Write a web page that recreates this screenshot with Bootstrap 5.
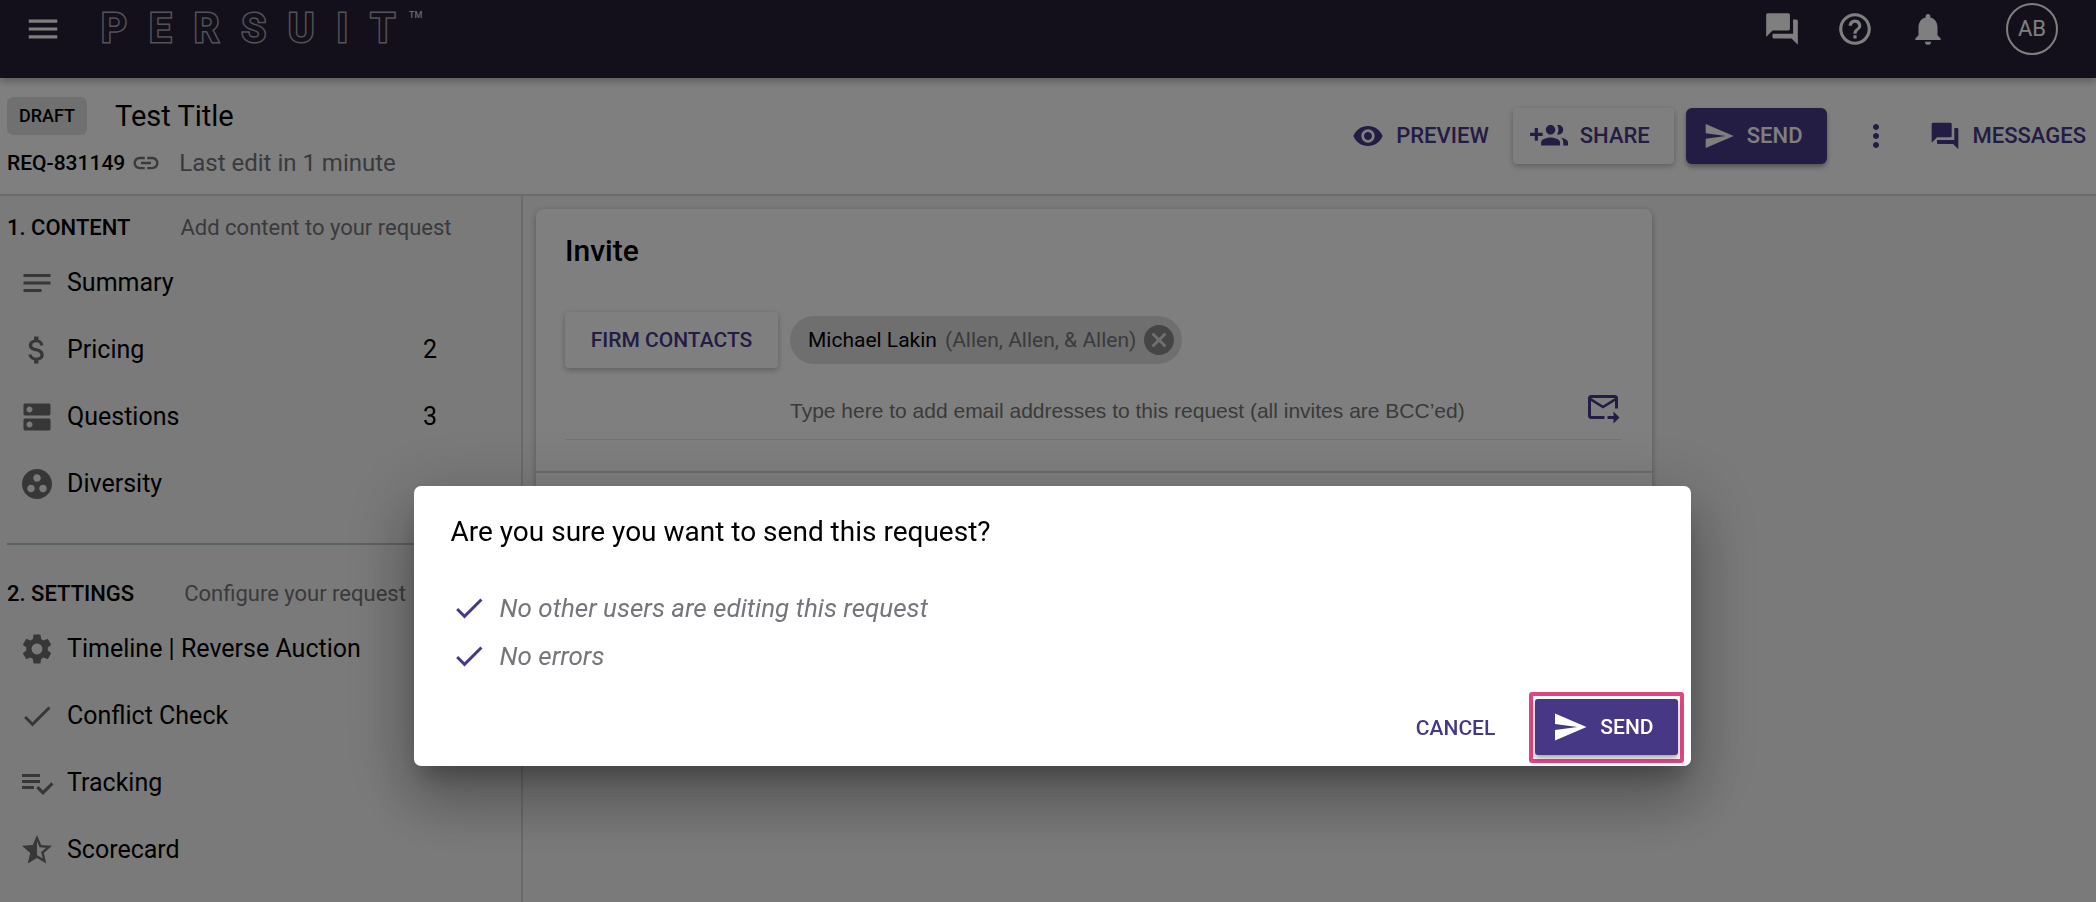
<!DOCTYPE html>
<html lang="en">
<head>
<meta charset="utf-8">
<meta name="viewport" content="width=device-width, initial-scale=1">
<title>Test Title</title>
<link href="https://cdn.jsdelivr.net/npm/bootstrap@5.3.0/dist/css/bootstrap.min.css" rel="stylesheet">
<style>
  :root { --brand: #473886; --muted: #75757b; --line: #d6d6d6; }
  body { font-family: Roboto, "Liberation Sans", sans-serif; font-size: 24px; line-height: 32px; color: #000; background: #f5f5f5; }
  svg { flex: none; fill: currentColor; display: block; }
  .i-30 { width: 30px; height: 30px; }
  .i-32 { width: 32px; height: 32px; }
  .i-36 { width: 36px; height: 36px; }
  .i-38 { width: 38px; height: 38px; }
  .medium { font-weight: 500; }
  .muted { color: var(--muted); }

  .topbar { height: 78px; background: #262036; box-shadow: 0 3px 8px rgba(0,0,0,.3); padding: 0 38px 20px 24px; position: relative; z-index: 1; }
  .topbar .btn, .avatar { color: #fff; }
  .brandmark { margin-left: 39px; text-decoration: none; }
  .outlined { width: 294px; font-size: 40px; line-height: 40px; font-weight: 600; color: #262036; -webkit-text-stroke: 3px #a8a6ae; paint-order: stroke fill; }
  .wordmark-tm { font-size: 9px; line-height: 12px; font-weight: 500; color: #d0d0d0; margin-left: 14px; }
  .avatar { width: 52px; height: 52px; border: 2px solid #fff; border-radius: 50%; font-size: 22px; padding: 0; background: none; }
  .tools { gap: 35px; }

  .titlebar { height: 118px; background: #fff; border-bottom: 2px solid var(--line); padding: 0 10px 0 7px; }
  .draft { background: #e0e0e0; border-radius: 6px; font-size: 18px; line-height: 38px; padding: 0 12px; }
  .doc-title { font-size: 29px; line-height: 38px; font-weight: 400; margin: 0; }
  .doc-meta { margin-top: 12px; gap: 2px; }
  .req { font-size: 21px; }

  .btn { --bs-btn-font-size: 22px; --bs-btn-font-weight: 500; --bs-btn-line-height: 32px; --bs-btn-padding-y: 12px; --bs-btn-border-width: 0; --bs-btn-border-radius: 4px; }
  .btn-plain { --bs-btn-color: var(--brand); --bs-btn-padding-x: 0; }
  .btn-raised { --bs-btn-color: var(--brand); --bs-btn-bg: #fff; --bs-btn-hover-bg: #fafafa; box-shadow: 0 2px 6px rgba(0,0,0,.28); }
  .btn-brand { --bs-btn-color: #fff; --bs-btn-bg: var(--brand); --bs-btn-hover-bg: #3a2d72; --bs-btn-hover-color: #fff; --bs-btn-border-radius: 6px; box-shadow: 0 3px 5px rgba(0,0,0,.35); }
  .btn-icon { display: flex; align-items: center; gap: 12px; height: 56px; }
  .btn-icon.btn-raised, .btn-icon.btn-brand { padding: 0 24px 0 17px; }
  .more { margin: 0 35px 0 31px; }
  .gap-before { margin-left: 12px; }

  .sidebar { width: 523px; border-right: 2px solid var(--line); padding: 15px 0 0 7px; }
  .sidebar h2 { font-size: 22px; line-height: 34px; font-weight: 500; margin: 0; }
  .hint { font-size: 22px; line-height: 34px; margin-left: 50px; }
  .steps { margin-top: 4px; font-size: 25px; }
  .step { height: 67px; padding: 0 84px 0 12px; color: #000; text-decoration: none; }
  .step svg { color: #6e6e6e; }
  .rule { height: 2px; background: #b9c4c2; margin: 26px 0 32px; }

  main { padding: 13px 0 0 13px; }
  .invite { width: 1116px; min-height: 480px; background: #fff; border-radius: 8px; box-shadow: 0 2px 6px rgba(0,0,0,.3); }
  .invite-body { padding: 24px 31px 31px 29px; border-bottom: 2px solid var(--line); }
  .invite h1 { font-size: 30px; line-height: 36px; font-weight: 500; margin: 0 0 43px; }
  .firm { width: 213px; --bs-btn-font-size: 21px; }
  .chip { height: 48px; border-radius: 24px; background: #dedede; padding: 0 8px 0 18px; font-size: 21px; }
  .chip .btn { color: #8a8a8a; }
  .add-row { padding: 15px 0 0 225px; border-bottom: 1px solid #e4e4e4; }
  .add-row input { font-family: "Liberation Sans", Arial, sans-serif; font-size: 21px; line-height: 32px; padding: 12px 0; border: 0; background: none; outline: 0; }
  .add-row input::placeholder { color: #757575; opacity: 1; }

  .modal-dialog { max-width: 1277px; margin: 486px auto 0; }
  .modal { padding-left: 8px; }
  .modal-content { border: 0; border-radius: 7px; box-shadow: 0 16px 22px -8px rgba(0,0,0,.25), 0 36px 56px 4px rgba(0,0,0,.2), 0 14px 68px 12px rgba(0,0,0,.16); color: #000; }
  .modal-title { font-size: 28px; line-height: 36px; font-weight: 400; }
  .modal-header { padding: 28px 37px 0; border: 0; }
  .modal-body { padding: 34px 37px 0; }
  .check-line { height: 48px; gap: 13px; font-size: 26px; font-style: italic; }
  .check-line svg { color: var(--brand); }
  .modal-footer { padding: 12px 7px 3px; border: 0; gap: 34px; }
  .modal-footer > * { margin: 0; }
  .modal-footer .btn { --bs-btn-font-size: 21px; }
  .highlight { border: 4px solid #de4680; border-radius: 3px; padding: 3px 2px 4px; }
  .highlight .btn { --bs-btn-border-radius: 3px; }
</style>
</head>
<body class="min-vh-100 d-flex flex-column">

<svg class="d-none" aria-hidden="true">
  <symbol id="menu" viewBox="0 0 24 24"><path d="M3 18h18v-2H3v2zm0-5h18v-2H3v2zm0-7v2h18V6H3z"/></symbol>
  <symbol id="forum" viewBox="0 0 24 24"><path d="M21 6h-2v9H6v2c0 .55.45 1 1 1h11l4 4V7c0-.55-.45-1-1-1zm-4 6V3c0-.55-.45-1-1-1H3c-.55 0-1 .45-1 1v14l4-4h10c.55 0 1-.45 1-1z"/></symbol>
  <symbol id="help" viewBox="0 0 24 24"><path d="M11 18h2v-2h-2v2zm1-16C6.48 2 2 6.48 2 12s4.48 10 10 10 10-4.48 10-10S17.52 2 12 2zm0 18c-4.41 0-8-3.59-8-8s3.59-8 8-8 8 3.59 8 8-3.59 8-8 8zm0-14c-2.21 0-4 1.79-4 4h2c0-1.1.9-2 2-2s2 .9 2 2c0 2-3 1.75-3 5h2c0-2.25 3-2.5 3-5 0-2.21-1.79-4-4-4z"/></symbol>
  <symbol id="bell" viewBox="0 0 24 24"><path d="M12 22c1.1 0 2-.9 2-2h-4c0 1.1.89 2 2 2zm6-6v-5c0-3.07-1.64-5.64-4.5-6.32V4c0-.83-.67-1.5-1.5-1.5s-1.5.67-1.5 1.5v.68C7.63 5.36 6 7.92 6 11v5l-2 2v1h16v-1l-2-2z"/></symbol>
  <symbol id="eye" viewBox="0 0 24 24"><path d="M12 4.5C7 4.5 2.73 7.61 1 12c1.73 4.39 6 7.5 11 7.5s9.27-3.11 11-7.5c-1.73-4.39-6-7.5-11-7.5zM12 17c-2.76 0-5-2.24-5-5s2.24-5 5-5 5 2.24 5 5-2.24 5-5 5zm0-8c-1.66 0-3 1.34-3 3s1.34 3 3 3 3-1.34 3-3-1.34-3-3-3z"/></symbol>
  <symbol id="group-add" viewBox="0 0 24 24"><path d="M8 10H5V7H3v3H0v2h3v3h2v-3h3v-2zm10 1c1.66 0 2.99-1.34 2.99-3S19.66 5 18 5c-.32 0-.63.05-.91.14.57.81.9 1.79.9 2.86s-.34 2.04-.9 2.86c.28.09.59.14.91.14zm-5 0c1.66 0 2.99-1.34 2.99-3S14.66 5 13 5c-1.66 0-3 1.34-3 3s1.34 3 3 3zm6.62 2.16c.83.73 1.38 1.66 1.38 2.84v2h3v-2c0-1.54-2.37-2.49-4.38-2.84zM13 13c-2 0-6 1-6 3v2h12v-2c0-2-4-3-6-3z"/></symbol>
  <symbol id="send" viewBox="0 0 24 24"><path d="M2.01 21L23 12 2.01 3 2 10l15 2-15 2z"/></symbol>
  <symbol id="more" viewBox="0 0 24 24"><path d="M12 8c1.1 0 2-.9 2-2s-.9-2-2-2-2 .9-2 2 .9 2 2 2zm0 2c-1.1 0-2 .9-2 2s.9 2 2 2 2-.9 2-2-.9-2-2-2zm0 6c-1.1 0-2 .9-2 2s.9 2 2 2 2-.9 2-2-.9-2-2-2z"/></symbol>
  <symbol id="link" viewBox="0 0 24 24"><path d="M3.9 12c0-1.71 1.39-3.1 3.1-3.1h4V7H7c-2.76 0-5 2.24-5 5s2.24 5 5 5h4v-1.9H7c-1.71 0-3.1-1.39-3.1-3.1zM8 13h8v-2H8v2zm9-6h-4v1.9h4c1.71 0 3.1 1.39 3.1 3.1s-1.39 3.1-3.1 3.1h-4V17h4c2.76 0 5-2.24 5-5s-2.24-5-5-5z"/></symbol>
  <symbol id="notes" viewBox="0 0 24 24"><path d="M3 18h12v-2H3v2zM3 6v2h18V6H3zm0 7h18v-2H3v2z"/></symbol>
  <symbol id="dollar" viewBox="0 0 24 24"><path d="M11.8 10.9c-2.27-.59-3-1.2-3-2.15 0-1.09 1.01-1.85 2.7-1.85 1.78 0 2.44.85 2.5 2.1h2.21c-.07-1.72-1.12-3.3-3.21-3.81V3h-3v2.16c-1.94.42-3.5 1.68-3.5 3.61 0 2.31 1.91 3.46 4.7 4.13 2.5.6 3 1.48 3 2.41 0 .69-.49 1.79-2.7 1.79-2.06 0-2.87-.92-2.98-2.1h-2.2c.12 2.19 1.76 3.42 3.68 3.83V21h3v-2.15c1.95-.37 3.5-1.5 3.5-3.55 0-2.84-2.43-3.81-4.7-4.4z"/></symbol>
  <symbol id="dns" viewBox="0 0 24 24"><path d="M20 13H4c-.55 0-1 .45-1 1v6c0 .55.45 1 1 1h16c.55 0 1-.45 1-1v-6c0-.55-.45-1-1-1zM7 19c-1.1 0-2-.9-2-2s.9-2 2-2 2 .9 2 2-.9 2-2 2zM20 3H4c-.55 0-1 .45-1 1v6c0 .55.45 1 1 1h16c.55 0 1-.45 1-1V4c0-.55-.45-1-1-1zM7 9c-1.1 0-2-.9-2-2s.9-2 2-2 2 .9 2 2-.9 2-2 2z"/></symbol>
  <symbol id="group-work" viewBox="0 0 24 24"><path d="M12 2C6.48 2 2 6.48 2 12s4.48 10 10 10 10-4.48 10-10S17.52 2 12 2zM8 17.5c-1.38 0-2.5-1.12-2.5-2.5s1.12-2.5 2.5-2.5 2.5 1.12 2.5 2.5-1.12 2.5-2.5 2.5zM9.5 8c0-1.38 1.12-2.5 2.5-2.5s2.5 1.12 2.5 2.5-1.12 2.5-2.5 2.5S9.5 9.38 9.5 8zm6.5 9.5c-1.38 0-2.5-1.12-2.5-2.5s1.12-2.5 2.5-2.5 2.5 1.12 2.5 2.5-1.12 2.5-2.5 2.5z"/></symbol>
  <symbol id="gear" viewBox="0 0 24 24"><path d="M19.14 12.94c.04-.3.06-.61.06-.94 0-.32-.02-.64-.07-.94l2.03-1.58c.18-.14.23-.41.12-.61l-1.92-3.32c-.12-.22-.37-.29-.59-.22l-2.39.96c-.5-.38-1.03-.7-1.62-.94l-.36-2.54c-.04-.24-.24-.41-.48-.41h-3.84c-.24 0-.43.17-.47.41l-.36 2.54c-.59.24-1.13.57-1.62.94l-2.39-.96c-.22-.08-.47 0-.59.22L2.74 8.87c-.12.21-.08.47.12.61l2.03 1.58c-.05.3-.09.63-.09.94s.02.64.07.94l-2.03 1.58c-.18.14-.23.41-.12.61l1.92 3.32c.12.22.37.29.59.22l2.39-.96c.5.38 1.03.7 1.62.94l.36 2.54c.05.24.24.41.48.41h3.84c.24 0 .44-.17.47-.41l.36-2.54c.59-.24 1.13-.56 1.62-.94l2.39.96c.22.08.47 0 .59-.22l1.92-3.32c.12-.22.07-.47-.12-.61l-2.01-1.58zM12 15.6c-1.98 0-3.6-1.62-3.6-3.6s1.62-3.6 3.6-3.6 3.6 1.62 3.6 3.6-1.62 3.6-3.6 3.6z"/></symbol>
  <symbol id="check" viewBox="0 0 24 24"><path d="M9 16.17L4.83 12l-1.42 1.41L9 19 21 7l-1.41-1.41z"/></symbol>
  <symbol id="list-check" viewBox="0 0 24 24"><path d="M14 10H2v2h12v-2zm0-4H2v2h12V6zM2 16h8v-2H2v2zm19.5-4.5L23 13l-6.99 7-4.51-4.5L13 14l3.01 3 5.49-5.5z"/></symbol>
  <symbol id="star-half" viewBox="0 0 24 24"><path d="M22 9.24l-7.19-.62L12 2 9.19 8.63 2 9.24l5.46 4.73L5.82 21 12 17.27 18.18 21l-1.63-7.03L22 9.24zM12 15.4V6.1l1.71 4.04 4.38.38-3.32 2.88 1 4.28L12 15.4z"/></symbol>
  <symbol id="cancel" viewBox="2 2 20 20"><path d="M12 2C6.47 2 2 6.47 2 12s4.47 10 10 10 10-4.47 10-10S17.53 2 12 2zm5 13.59L15.59 17 12 13.41 8.41 17 7 15.59 10.59 12 7 8.41 8.41 7 12 10.59 15.59 7 17 8.41 13.41 12 17 15.59z"/></symbol>
  <symbol id="mail-next" viewBox="0 0 24 24"><path d="M20 4H4c-1.1 0-2 .9-2 2v12c0 1.1.9 2 2 2h9v-2H4V8l8 5 8-5v5h2V6c0-1.1-.9-2-2-2zm-8 7L4 6h16l-8 5zm7 4l4 4-4 4v-3h-4v-2h4v-3z"/></symbol>
</svg>

<header class="topbar d-flex align-items-center">
  <button class="btn p-0" type="button" aria-label="Menu"><svg class="i-38"><use href="#menu"/></svg></button>
  <a class="brandmark d-flex align-items-start" href="#" aria-label="PERSUIT">
    <span class="outlined d-flex justify-content-between"><span>P</span><span>E</span><span>R</span><span>S</span><span>U</span><span>I</span><span>T</span></span>
    <span class="wordmark-tm">TM</span>
  </a>
  <div class="tools d-flex align-items-center ms-auto">
    <button class="btn p-0" type="button" aria-label="Conversations"><svg class="i-38"><use href="#forum"/></svg></button>
    <button class="btn p-0" type="button" aria-label="Help"><svg class="i-38"><use href="#help"/></svg></button>
    <button class="btn p-0" type="button" aria-label="Notifications"><svg class="i-38"><use href="#bell"/></svg></button>
    <button class="avatar ms-4" type="button">AB</button>
  </div>
</header>

<div class="titlebar d-flex align-items-center justify-content-between">
  <div class="pt-1">
    <div class="d-flex align-items-center">
      <span class="draft medium">DRAFT</span>
      <h1 class="doc-title ms-4 ps-1">Test Title</h1>
    </div>
    <div class="doc-meta d-flex align-items-center">
      <span class="req medium">REQ-831149</span>
      <a class="muted ms-1" href="#" aria-label="Copy link"><svg class="i-30"><use href="#link"/></svg></a>
      <span class="muted ms-3">Last edit in 1 minute</span>
    </div>
  </div>
  <div class="actions d-flex align-items-center">
    <button class="btn btn-plain btn-icon" type="button"><svg class="i-32"><use href="#eye"/></svg>PREVIEW</button>
    <button class="btn btn-raised btn-icon ms-4" type="button"><svg class="i-38"><use href="#group-add"/></svg>SHARE</button>
    <button class="btn btn-brand btn-icon gap-before" type="button"><svg class="i-32"><use href="#send"/></svg>SEND</button>
    <button class="btn btn-plain more" type="button" aria-label="More"><svg class="i-36"><use href="#more"/></svg></button>
    <button class="btn btn-plain btn-icon" type="button"><svg class="i-32"><use href="#forum"/></svg>MESSAGES</button>
  </div>
</div>

<div class="d-flex flex-grow-1">
  <nav class="sidebar flex-shrink-0">
    <div class="d-flex"><h2>1. CONTENT</h2><span class="hint muted">Add content to your request</span></div>
    <div class="steps">
      <a class="step d-flex align-items-center" href="#"><svg class="i-36 me-2"><use href="#notes"/></svg><span class="ms-1">Summary</span></a>
      <a class="step d-flex align-items-center" href="#"><svg class="i-36 me-2"><use href="#dollar"/></svg><span class="ms-1">Pricing</span><span class="ms-auto">2</span></a>
      <a class="step d-flex align-items-center" href="#"><svg class="i-36 me-2"><use href="#dns"/></svg><span class="ms-1">Questions</span><span class="ms-auto">3</span></a>
      <a class="step d-flex align-items-center" href="#"><svg class="i-36 me-2"><use href="#group-work"/></svg><span class="ms-1">Diversity</span></a>
    </div>
    <div class="rule"></div>
    <div class="d-flex"><h2>2. SETTINGS</h2><span class="hint muted">Configure your request</span></div>
    <div class="steps">
      <a class="step d-flex align-items-center" href="#"><svg class="i-36 me-2"><use href="#gear"/></svg><span class="ms-1">Timeline | Reverse Auction</span></a>
      <a class="step d-flex align-items-center" href="#"><svg class="i-36 me-2"><use href="#check"/></svg><span class="ms-1">Conflict Check</span></a>
      <a class="step d-flex align-items-center" href="#"><svg class="i-36 me-2"><use href="#list-check"/></svg><span class="ms-1">Tracking</span></a>
      <a class="step d-flex align-items-center" href="#"><svg class="i-36 me-2"><use href="#star-half"/></svg><span class="ms-1">Scorecard</span></a>
    </div>
  </nav>

  <main class="flex-grow-1">
    <section class="invite">
      <div class="invite-body">
        <h1>Invite</h1>
        <div class="d-flex align-items-center">
          <button class="btn btn-raised firm" type="button">FIRM CONTACTS</button>
          <div class="chip gap-before d-flex align-items-center">
            <span>Michael Lakin</span><span class="muted mx-2">(Allen, Allen, &amp; Allen)</span>
            <button class="btn p-0" type="button" aria-label="Remove"><svg class="i-30"><use href="#cancel"/></svg></button>
          </div>
        </div>
        <div class="add-row d-flex align-items-center">
          <input class="flex-grow-1" type="text" aria-label="Email addresses" placeholder="Type here to add email addresses to this request (all invites are BCC’ed)">
          <button class="btn btn-plain p-0 mb-2" type="button" aria-label="Add invite"><svg class="i-36"><use href="#mail-next"/></svg></button>
        </div>
      </div>
    </section>
  </main>
</div>

<div class="modal-backdrop show"></div>
<div class="modal show d-block" tabindex="-1" role="dialog" aria-modal="true" aria-labelledby="confirmTitle">
  <div class="modal-dialog">
    <div class="modal-content">
      <div class="modal-header"><h2 class="modal-title" id="confirmTitle">Are you sure you want to send this request?</h2></div>
      <div class="modal-body">
        <div class="check-line muted d-flex align-items-center"><svg class="i-36"><use href="#check"/></svg>No other users are editing this request</div>
        <div class="check-line muted d-flex align-items-center"><svg class="i-36"><use href="#check"/></svg>No errors</div>
      </div>
      <div class="modal-footer">
        <button class="btn btn-plain" type="button">CANCEL</button>
        <div class="highlight">
          <button class="btn btn-brand btn-icon" type="button"><svg class="i-36"><use href="#send"/></svg>SEND</button>
        </div>
      </div>
    </div>
  </div>
</div>

<script src="https://cdn.jsdelivr.net/npm/bootstrap@5.3.0/dist/js/bootstrap.bundle.min.js"></script>
</body>
</html>
